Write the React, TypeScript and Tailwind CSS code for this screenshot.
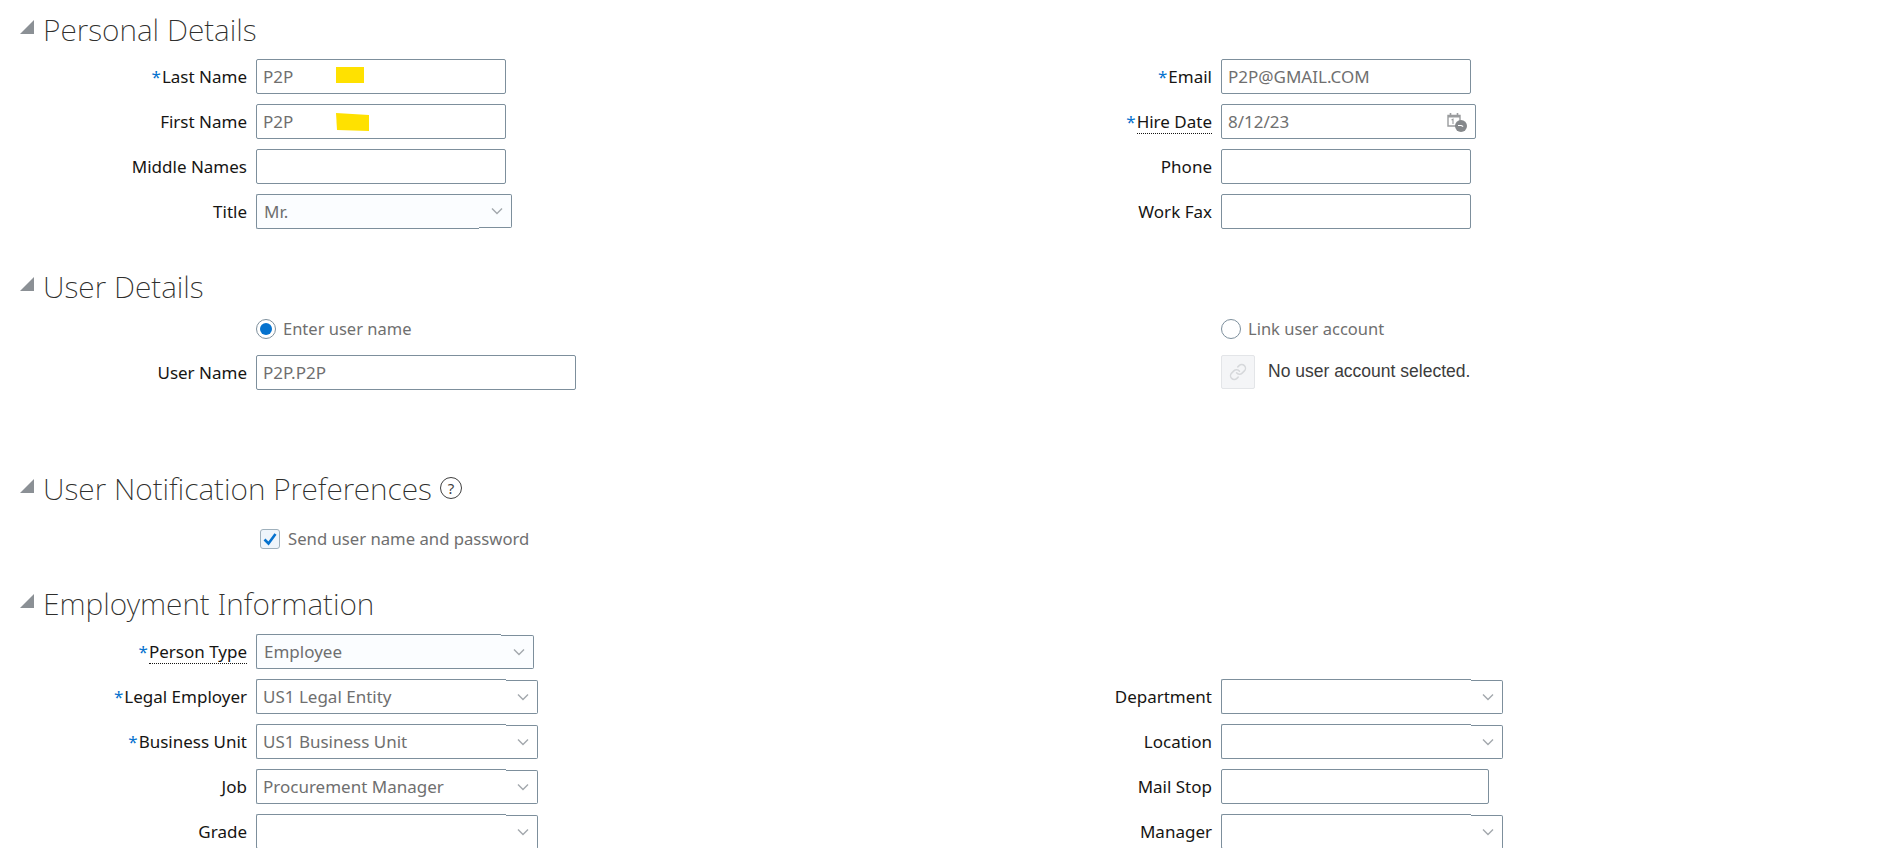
import { ReactNode } from "react";
import { Link as LinkIcon } from "lucide-react";

const ui = "font-['Noto_Sans',sans-serif]";

function Chevron() {
  return (
    <svg width="14" height="14" viewBox="0 0 14 14" fill="none" stroke="#a3a8ad" strokeWidth="1.4">
      <path d="M2 4.5 7 9.5 12 4.5" />
    </svg>
  );
}

function Triangle() {
  return (
    <svg width="14" height="14" viewBox="0 0 14 14" className="shrink-0">
      <path d="M14 0V14H0Z" fill="#8b9095" />
    </svg>
  );
}

function Heading({ title, children }: { title: string; children?: ReactNode }) {
  return (
    <div className="flex h-[40px] items-center pl-[20px]">
      <span className="mb-[7px]">
        <Triangle />
      </span>
      <h2 className="ml-[9px] text-[30px] leading-[40px] font-extralight text-[#2f2f2d]">{title}</h2>
      {children}
    </div>
  );
}

function Label({ text, required, hint }: { text: string; required?: boolean; hint?: boolean }) {
  return (
    <div className="w-[247px] shrink-0 text-right text-[17px] leading-[24px] text-[#161513]">
      {required && <span className="mr-px text-[#0572ce]">*</span>}
      <span className={hint ? "border-b border-dotted border-[#161513]" : ""}>{text}</span>
    </div>
  );
}

function TextBox({ value, width = "w-[250px]", children }: { value?: string; width?: string; children?: ReactNode }) {
  return (
    <div className={`relative flex h-[35px] ${width} items-center rounded-[2px] border border-[#7d8f9c] bg-white pl-[6px] text-[17px] text-[#6f6f6f]`}>
      {value}
      {children}
    </div>
  );
}

function Select({
  value,
  main = "w-[250px]",
  end = "w-[32px]",
  tint,
  stepBottom,
}: {
  value?: string;
  main?: string;
  end?: string;
  tint?: boolean;
  stepBottom?: boolean;
}) {
  const bg = tint ? "bg-[#fbfdff]" : "bg-white";
  return (
    <div className="flex h-[35px] items-stretch">
      <div
        className={`flex ${main} items-center rounded-l-[2px] border-y border-l border-[#7d8f9c] ${bg} ${
          tint ? "pl-[7px]" : "pl-[6px]"
        } text-[17px] text-[#6f6f6f]`}
      >
        {value}
      </div>
      <div
        className={`flex ${end} items-center justify-end rounded-r-[2px] border-y border-r border-[#7d8f9c] ${bg} pr-[7px] ${
          stepBottom ? "mb-px" : "mt-px"
        }`}
      >
        <Chevron />
      </div>
    </div>
  );
}

function Field({ children }: { children: ReactNode }) {
  return <div className="flex items-center gap-[9px]">{children}</div>;
}

function Row({ left, right }: { left?: ReactNode; right?: ReactNode }) {
  return (
    <div className="flex h-[35px]">
      <div className="w-[965px] shrink-0">{left}</div>
      <div>{right}</div>
    </div>
  );
}

function Radio({ checked }: { checked?: boolean }) {
  return (
    <span className="flex h-[20px] w-[20px] shrink-0 items-center justify-center rounded-full border border-[#7d8f9c] bg-white">
      {checked && <span className="h-[12px] w-[12px] rounded-full bg-[#0572ce]" />}
    </span>
  );
}

function CalendarIcon() {
  return (
    <svg width="22" height="22" viewBox="0 0 22 22" className="absolute right-[7px] top-[6px]">
      <path d="M2 4.5h12v10.5H2z" fill="none" stroke="#9a9c9e" strokeWidth="1.4" />
      <path d="M2 4h12v2.5H2z" fill="#9a9c9e" />
      <path d="M4.5 2v3M11.5 2v3" stroke="#9a9c9e" strokeWidth="1.6" />
      <path d="M5.5 9 7 8.2V13" fill="none" stroke="#9a9c9e" strokeWidth="1.1" />
      <circle cx="15" cy="15" r="6" fill="#85888b" />
      <path d="M12 14.5h3.2l2 1" fill="none" stroke="#fff" strokeWidth="1.1" />
    </svg>
  );
}

export default function App() {
  return (
    <div className={`${ui} h-screen overflow-hidden bg-white`}>
      <div className="h-[848px] overflow-hidden pt-[10px]">
        <Heading title="Personal Details" />
        <div className="mt-[9px] flex flex-col gap-[10px]">
          <Row
            left={
              <Field>
                <Label text="Last Name" required />
                <TextBox value="P2P">
                  <span className="absolute left-[79px] top-[7px] h-[16px] w-[28px] bg-[#ffe100]" />
                </TextBox>
              </Field>
            }
            right={
              <Field>
                <Label text="Email" required />
                <TextBox value="P2P@GMAIL.COM" />
              </Field>
            }
          />
          <Row
            left={
              <Field>
                <Label text="First Name" />
                <TextBox value="P2P">
                  <svg width="34" height="18" viewBox="0 0 34 18" className="absolute left-[79px] top-[8px]">
                    <path d="M0 0 33 2V18L1 17Z" fill="#ffe100" />
                  </svg>
                </TextBox>
              </Field>
            }
            right={
              <Field>
                <Label text="Hire Date" required hint />
                <TextBox value="8/12/23" width="w-[255px]">
                  <CalendarIcon />
                </TextBox>
              </Field>
            }
          />
          <Row
            left={
              <Field>
                <Label text="Middle Names" />
                <TextBox />
              </Field>
            }
            right={
              <Field>
                <Label text="Phone" />
                <TextBox />
              </Field>
            }
          />
          <Row
            left={
              <Field>
                <Label text="Title" />
                <Select value="Mr." main="w-[223px]" end="w-[33px]" tint stepBottom />
              </Field>
            }
            right={
              <Field>
                <Label text="Work Fax" />
                <TextBox />
              </Field>
            }
          />
        </div>

        <div className="mt-[38px]">
          <Heading title="User Details" />
        </div>
        <div className="mt-[8px] flex h-[28px] items-center">
          <div className="flex w-[965px] shrink-0 items-center gap-[7px] pl-[256px] text-[16.5px] text-[#6f6f6f]">
            <Radio checked />
            Enter user name
          </div>
          <div className="ml-[256px] flex items-center gap-[7px] text-[16.5px] text-[#6f6f6f]">
            <Radio />
            Link user account
          </div>
        </div>
        <div className="mt-[12px]">
          <Row
            left={
              <Field>
                <Label text="User Name" />
                <TextBox value="P2P.P2P" width="w-[320px]" />
              </Field>
            }
            right={
              <div className="ml-[256px] flex items-center">
                <span className="flex h-[34px] w-[34px] items-center justify-center rounded-[2px] border border-[#e3e5e8] bg-[#f4f5f7]">
                  <LinkIcon size={18} className="text-[#d6d8db]" />
                </span>
                <span className="mb-[2px] ml-[13px] font-['Liberation_Sans',sans-serif] text-[17.5px] text-[#3c3c3c]">
                  No user account selected.
                </span>
              </div>
            }
          />
        </div>

        <div className="mt-[79px]">
          <Heading title="User Notification Preferences">
            <span className="mb-[2px] ml-[8px] flex h-[22px] w-[22px] items-center justify-center rounded-full border-[1.5px] border-[#3f3f3f] text-[15px] text-[#3f3f3f]">
              ?
            </span>
          </Heading>
        </div>
        <div className="mt-[16px] flex h-[28px] items-center gap-[8px] pl-[260px] text-[16.7px] text-[#6f6f6f]">
          <span className="flex h-[20px] w-[20px] shrink-0 items-center justify-center rounded-[3px] border border-[#9fb0bc] bg-[#eef5fb]">
            <svg width="16" height="16" viewBox="0 0 16 16" fill="none" stroke="#0572ce" strokeWidth="2.6">
              <path d="M2.5 8.5 6.5 12.5 13.5 3" />
            </svg>
          </span>
          Send user name and password
        </div>

        <div className="mt-[31px]">
          <Heading title="Employment Information" />
        </div>
        <div className="mt-[10px] flex flex-col gap-[10px]">
          <Row
            left={
              <Field>
                <Label text="Person Type" required hint />
                <Select value="Employee" main="w-[245px]" end="w-[33px]" tint />
              </Field>
            }
          />
          <Row
            left={
              <Field>
                <Label text="Legal Employer" required />
                <Select value="US1 Legal Entity" />
              </Field>
            }
            right={
              <Field>
                <Label text="Department" />
                <Select />
              </Field>
            }
          />
          <Row
            left={
              <Field>
                <Label text="Business Unit" required />
                <Select value="US1 Business Unit" />
              </Field>
            }
            right={
              <Field>
                <Label text="Location" />
                <Select />
              </Field>
            }
          />
          <Row
            left={
              <Field>
                <Label text="Job" />
                <Select value="Procurement Manager" />
              </Field>
            }
            right={
              <Field>
                <Label text="Mail Stop" />
                <TextBox width="w-[268px]" />
              </Field>
            }
          />
          <Row
            left={
              <Field>
                <Label text="Grade" />
                <Select />
              </Field>
            }
            right={
              <Field>
                <Label text="Manager" />
                <Select />
              </Field>
            }
          />
        </div>
      </div>
    </div>
  );
}
